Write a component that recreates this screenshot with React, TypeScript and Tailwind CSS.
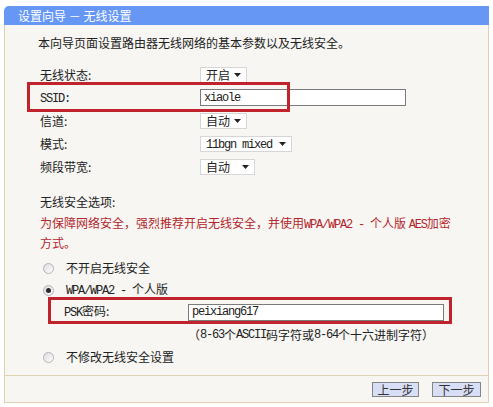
import React from 'react';

// latin runs in the old router UI are half-width, so squeeze the mono font
const M = ({ children }: { children: React.ReactNode }) => (
  <span className="font-['Liberation_Mono'] tracking-[-1.2px]">{children}</span>
);

const Arrow = () => (
  <svg width="7" height="4" viewBox="0 0 7 4" className="ml-auto shrink-0">
    <path d="M0 0h7L3.5 4z" fill="#222" />
  </svg>
);

const Select = ({ label, w }: { label: React.ReactNode; w: string }) => (
  <div className={`${w} h-[16px] flex items-center bg-white border border-[#d6d6d6] pl-[5px] pr-[5px]`}>
    <span>{label}</span>
    <Arrow />
  </div>
);

const Radio = ({ checked }: { checked?: boolean }) => (
  <span className="w-[11px] h-[11px] rounded-full border border-[#b4b4b4] bg-gradient-to-br from-[#dcdcdc] to-white flex items-center justify-center shrink-0">
    {checked && <span className="w-[5px] h-[5px] rounded-full bg-[#2a2a2a]" />}
  </span>
);

const FormRow = ({ label, children }: { label: React.ReactNode; children: React.ReactNode }) => (
  <div className="h-[23px] flex items-center ml-[35px]">
    <div className="w-[160px]">{label}</div>
    {children}
  </div>
);

export default function App() {
  return (
    <div className="w-[493px] h-[407px] bg-white pt-[6px] pl-[4px] text-[12px] leading-none text-[#222] font-['Noto_Sans_CJK_SC',sans-serif]">
      <div className="relative w-[485px]">
        <div className="h-[19px] bg-[#6797f5] rounded-tl-[5px] flex items-center pl-[14px] text-white">
          设置向导 － 无线设置
        </div>

        <div className="h-[351px] bg-[#f7f6f3] border-x border-b border-[#dfd1b2] flex flex-col">
          <div className="h-[18px] mt-[9px] ml-[33px] flex items-center">
            本向导页面设置路由器无线网络的基本参数以及无线安全。
          </div>

          <div className="mt-[11px] flex flex-col">
            <FormRow label="无线状态:">
              <Select label="开启" w="w-[47px]" />
            </FormRow>
            <FormRow label={<M>SSID:</M>}>
              <div className="w-[206px] h-[17px] bg-white border border-[#7b7b7b] flex items-center pl-[3px]">
                <M>xiaole</M>
              </div>
            </FormRow>
            <FormRow label="信道:">
              <Select label="自动" w="w-[47px]" />
            </FormRow>
            <FormRow label="模式:">
              <Select label={<M>11bgn mixed</M>} w="w-[92px]" />
            </FormRow>
            <FormRow label="频段带宽:">
              <Select label="自动" w="w-[55px]" />
            </FormRow>
          </div>

          <div className="h-[18px] mt-[15px] ml-[35px] flex items-center">无线安全选项:</div>
          <div className="mt-[3px] ml-[35px] text-[#b3262c] leading-[18px]">
            为保障网络安全，强烈推荐开启无线安全，并使用<M>WPA/WPA2 - </M>个人版 <M>AES</M>加密
            <br />
            方式。
          </div>

          <div className="h-[22px] mt-[5px] ml-[38px] flex items-center gap-[12px]">
            <Radio />
            <span>不开启无线安全</span>
          </div>
          <div className="h-[22px] ml-[38px] flex items-center gap-[12px]">
            <Radio checked />
            <span>
              <M>WPA/WPA2 - </M>个人版
            </span>
          </div>
          <div className="h-[22px] ml-[59px] flex items-center">
            <div className="w-[124px]">
              <M>PSK</M>密码:
            </div>
            <div className="w-[256px] h-[17px] bg-white border border-[#7b7b7b] flex items-center pl-[3px]">
              <M>peixiang617</M>
            </div>
          </div>
          <div className="h-[22px] mt-[1px] ml-[183px] flex items-center">
            （<M>8-63</M>个<M>ASCII</M>码字符或<M>8-64</M>个十六进制字符）
          </div>
          <div className="h-[22px] ml-[38px] flex items-center gap-[12px]">
            <Radio />
            <span>不修改无线安全设置</span>
          </div>
        </div>

        <div className="h-[27px] bg-[#f7f6f3] border-x border-b border-[#dfd1b2] flex justify-end items-start gap-[13px] pr-[7px] pt-[6px]">
          <button className="w-[47px] h-[15px] bg-[#d8def6] border border-[#858585] flex items-center justify-center text-[#333]">
            上一步
          </button>
          <button className="w-[49px] h-[15px] bg-[#d8def6] border border-[#858585] flex items-center justify-center text-[#333]">
            下一步
          </button>
        </div>

        <div className="absolute left-[23px] top-[76px] w-[263px] h-[30px] border-[3px] border-[#c0232b]" />
        <div className="absolute left-[44px] top-[291px] w-[404px] h-[27px] border-[3px] border-[#c0232b]" />
      </div>
    </div>
  );
}
